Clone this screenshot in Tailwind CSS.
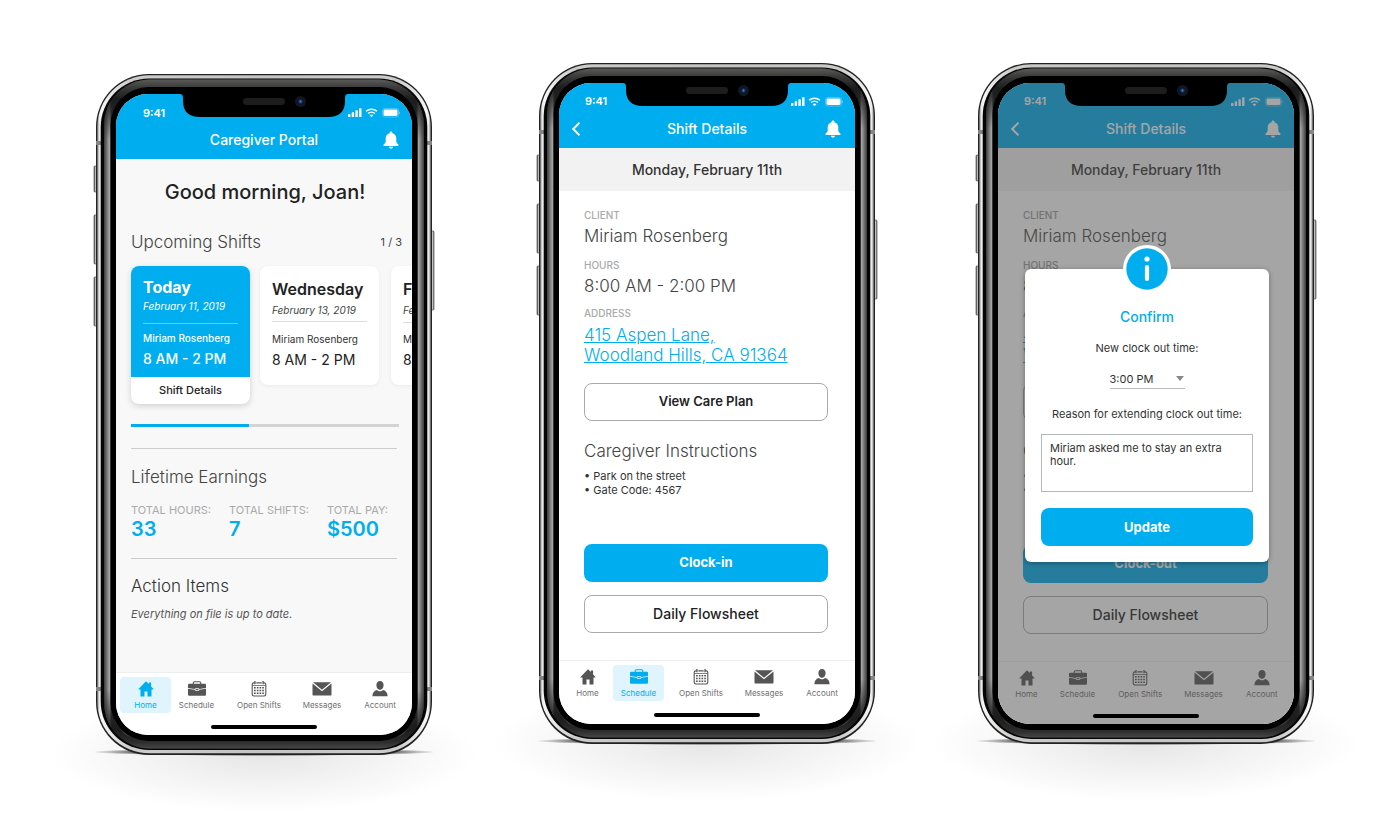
<!DOCTYPE html>
<html lang="en">
<head>
<meta charset="utf-8">
<meta name="viewport" content="width=device-width, initial-scale=1">
<title>Caregiver Portal</title>
<script src="https://cdn.jsdelivr.net/npm/@tailwindcss/browser@4"></script>
</head>
<body class="min-h-screen bg-white font-['Inter','Liberation_Sans',sans-serif] text-[#222]">

<svg class="absolute h-0 w-0" aria-hidden="true">
  <defs>
    <linearGradient id="steel" x1="0" x2="1" y1="0" y2="0">
      <stop offset="0" stop-color="#777"/><stop offset=".006" stop-color="#e8e8e8"/><stop offset=".012" stop-color="#f6f6f6"/><stop offset=".1" stop-color="#cbcbc9"/>
      <stop offset=".5" stop-color="#c4c4c2"/><stop offset=".9" stop-color="#cbcbc9"/><stop offset=".988" stop-color="#f6f6f6"/><stop offset=".994" stop-color="#e8e8e8"/><stop offset="1" stop-color="#777"/>
    </linearGradient>
    <linearGradient id="sides" x1="8" x2="328" y1="0" y2="0" gradientUnits="userSpaceOnUse">
      <stop offset="0" stop-color="#3a3a3a"/><stop offset=".017" stop-color="#a6a6a6"/><stop offset=".024" stop-color="#2a2a2a"/>
      <stop offset=".1" stop-color="#2a2a2a"/><stop offset=".9" stop-color="#2a2a2a"/>
      <stop offset=".976" stop-color="#2a2a2a"/><stop offset=".983" stop-color="#a6a6a6"/><stop offset="1" stop-color="#3a3a3a"/>
    </linearGradient>
    <linearGradient id="caps" x1="0" x2="0" y1="5" y2="676" gradientUnits="userSpaceOnUse">
      <stop offset="0" stop-color="#5c5c5a"/><stop offset=".012" stop-color="#3c3c3c"/><stop offset=".03" stop-color="#1c1c1c"/><stop offset=".09" stop-color="#222" stop-opacity="0"/>
      <stop offset=".91" stop-color="#222" stop-opacity="0"/><stop offset=".97" stop-color="#1c1c1c"/><stop offset=".988" stop-color="#2c2c2c"/><stop offset="1" stop-color="#4c4c4c"/>
    </linearGradient>
    <linearGradient id="key" x1="0" x2="1" y1="0" y2="0">
      <stop offset="0" stop-color="#555"/><stop offset=".5" stop-color="#ddd"/><stop offset="1" stop-color="#777"/>
    </linearGradient>
    <radialGradient id="contact"><stop offset="0" stop-color="#000" stop-opacity=".9"/><stop offset=".7" stop-color="#000" stop-opacity=".7"/><stop offset="1" stop-color="#000" stop-opacity="0"/></radialGradient>
    <radialGradient id="floor"><stop offset="0" stop-color="#000" stop-opacity=".1"/><stop offset=".5" stop-color="#000" stop-opacity=".05"/><stop offset="1" stop-color="#000" stop-opacity="0"/></radialGradient>
    <radialGradient id="lens"><stop offset="0" stop-color="#4f8fe0"/><stop offset=".45" stop-color="#1d3f7a"/><stop offset="1" stop-color="#0b1222"/></radialGradient>
  </defs>

  <symbol id="frame" viewBox="0 0 336 681" overflow="visible">
    <ellipse cx="168" cy="680" rx="215" ry="58" fill="url(#floor)"/>
    <ellipse cx="168" cy="678" rx="172" ry="4" fill="url(#contact)"/>
    <g stroke="#333" stroke-width=".6" fill="url(#key)">
      <rect x="-2" y="92" width="4" height="26" rx="1"/>
      <rect x="-2" y="141" width="4" height="49" rx="1"/>
      <rect x="-2" y="203" width="4" height="49" rx="1"/>
      <rect x="334" y="157" width="4" height="79" rx="1"/>
    </g>
    <rect width="336" height="681" rx="53" fill="#222"/>
    <rect x="1.200" y="1.300" width="333.600" height="678" rx="52" fill="url(#steel)"/>
    <path d="M0 67h5v4H0zM331 67h5v4h-5zM0 613h5v4H0zM331 613h5v4h-5z" fill="#858585"/>
    <rect x="4.700" y="4.500" width="326.600" height="671.500" rx="48.500" fill="#050505"/>
    <rect x="8" y="5.500" width="320" height="669" rx="46" fill="url(#sides)"/>
    <rect x="8" y="5.500" width="320" height="669" rx="46" fill="url(#caps)"/>
    <path d="M15 48Q18 28 34 18Q21 24 15 48zM321 48Q318 28 302 18Q315 24 321 48zM15 633Q18 653 34 663Q21 657 15 633zM321 633Q318 653 302 663Q315 657 321 633z" fill="#8b8b8b" opacity=".8"/>
    <rect x="14.500" y="13" width="307" height="654" rx="38" fill="#000"/>
  </symbol>

  <symbol id="notch" viewBox="0 0 168 24">
    <path d="M0 0Q3 0 3 4V7Q3 23 20 23H148Q165 23 165 7V4Q165 0 168 0Z" fill="#000"/>
    <rect x="63" y="4" width="42" height="7" rx="3.500" fill="#1d1d1d"/>
    <circle cx="120.500" cy="7.500" r="5.500" fill="#111722"/>
    <circle cx="120.500" cy="7.500" r="2.800" fill="url(#lens)"/>
  </symbol>

  <symbol id="status" viewBox="0 0 52 12">
    <g fill="currentColor">
      <rect x="0" y="7" width="2.400" height="3" rx=".6"/><rect x="3.700" y="5.300" width="2.400" height="4.700" rx=".6"/>
      <rect x="7.400" y="3.300" width="2.400" height="6.700" rx=".6"/><rect x="11.100" y="1.200" width="2.400" height="8.800" rx=".6"/>
      <path d="M23.500 7.400a2.900 2.900 0 0 1 1.900.8l-1.900 2-1.900-2a2.900 2.900 0 0 1 1.900-.8z"/>
      <rect x="35.500" y="2.500" width="14" height="6.500" rx="1.400"/>
      <path d="M50.900 4.200q1.100.5 1.100 1.600t-1.100 1.600z" opacity=".4"/>
    </g>
    <path d="M18.100 4.300a7.800 7.800 0 0 1 10.800 0M20.100 6.500a5 5 0 0 1 6.800 0" fill="none" stroke="currentColor" stroke-width="1.500"/>
    <rect x="34.400" y="1.400" width="16.200" height="8.700" rx="2.400" fill="none" stroke="currentColor" stroke-width=".7" opacity=".4"/>
  </symbol>

  <symbol id="bell" viewBox="0 0 16 18">
    <path d="M8 .5c.9 0 1.400.6 1.400 1.400v.3c2.400.6 3.900 2.500 3.900 4.900v3.500c0 1.300.9 1.900 2 3 .6.600.3 1.300-.5 1.300H1.200c-.8 0-1.100-.7-.5-1.300 1.100-1.100 2-1.700 2-3V7.100c0-2.400 1.500-4.300 3.900-4.900v-.3C6.600 1.100 7.100.5 8 .5zM6 15.700h4c0 1-.8 1.800-2 1.800s-2-.8-2-1.800z" fill="currentColor"/>
  </symbol>
  <symbol id="home" viewBox="0 0 20 16">
    <path d="M10 .3l2.800 2.800V1.600h2.300v3.800l2.400 2.600v.6h-2V15.400h-4V10.600h-3v4.800h-4V8.600h-2V8z" fill="currentColor"/>
  </symbol>
  <symbol id="case" viewBox="0 0 20 16">
    <path d="M6.300 3.200V1.900Q6.300.8 7.400.8h5.200q1.100 0 1.100 1.100v1.300" fill="none" stroke="currentColor" stroke-width="1.100"/>
    <path d="M2.100 2.700h15.800q1.100 0 1.100 1.100V7l-6.600 1.100q-.3-.8-1.200-.8H8.800q-.9 0-1.200.8L1 7V3.800q0-1.100 1.100-1.100zM1 7.700l6.600 1.100q.3 1.100 1.200 1.100h2.400q.9 0 1.200-1.100L19 7.700v5.900q0 1.200-1.100 1.200H2.100Q1 14.800 1 13.600z" fill="currentColor"/>
    <rect x="8.500" y="8" width="3" height="1.200" rx=".5" fill="currentColor"/>
  </symbol>
  <symbol id="cal" viewBox="0 0 20 16">
    <path d="M5.800 1.900H4.900q-1.700 0-1.700 1.700v9.700q0 1.700 1.700 1.700h10.200q1.700 0 1.700-1.700V3.600q0-1.700-1.700-1.700h-.9M7.300 1.900h5.400" fill="none" stroke="currentColor" stroke-width="1.100"/>
    <path d="M5.300 0h1.300v3.200H5.300zM13.400 0h1.300v3.200h-1.300zM3.500 4.200h13v.7h-13zM5 6h1.700v1.600H5zM7.800 6h1.700v1.600H7.800zM10.500 6h1.700v1.600h-1.700zM13.200 6h1.700v1.600h-1.700zM5 8.700h1.700v1.600H5zM7.800 8.700h1.700v1.600H7.800zM10.500 8.700h1.700v1.600h-1.700zM13.200 8.700h1.700v1.600h-1.700zM5 11.400h1.700V13H5zM7.800 11.400h1.700V13H7.800zM10.500 11.400h1.700V13h-1.700zM13.200 11.400h1.700V13h-1.700z" fill="currentColor"/>
  </symbol>
  <symbol id="mail" viewBox="0 0 20 16">
    <path d="M1 1.300h18L10 8.700zM.5 2.400L10 10.300l9.500-7.900v11q0 1.200-1.200 1.200H1.700Q.5 14.600.5 13.400z" fill="currentColor"/>
  </symbol>
  <symbol id="user" viewBox="0 0 20 16">
    <path d="M10 0c2.300 0 3.600 1.700 3.600 4S12.300 8.800 10 8.800 6.400 6.300 6.400 4 7.700 0 10 0zM2.400 15.300c0-3.400 1.500-5.600 4.500-6.300 1 .9 2 1.200 3.100 1.200S12.100 9.900 13.100 9c3 .7 4.500 2.900 4.500 6.300z" fill="currentColor"/>
  </symbol>
</svg>

<main class="flex items-start justify-center pt-[63px] pb-[61px] pl-[10px]">

  <!-- Home -->
  <section aria-label="Home" class="relative mt-[11px] h-[681px] w-[336px] shrink-0 p-5">
    <svg class="absolute inset-0 h-full w-full overflow-visible" aria-hidden="true"><use href="#frame"/></svg>
    <div class="relative flex h-full flex-col overflow-hidden rounded-[32px] bg-[#f8f8f8]">
      <svg class="absolute top-0 left-[64px] h-6 w-[168px]" aria-hidden="true"><use href="#notch"/></svg>
      <header class="h-[65px] bg-[#00adef] text-white">
        <div class="flex h-[34px] items-center justify-between pt-1 pr-[12px] pl-[27px]">
          <span class="text-[11px] font-semibold">9:41</span>
          <svg class="h-3 w-[52px]" aria-hidden="true"><use href="#status"/></svg>
        </div>
        <div class="grid h-6 grid-cols-[40px_1fr_40px] items-center">
          <h1 class="col-start-2 text-center text-sm leading-6 font-medium">Caregiver Portal</h1>
          <button type="button" aria-label="Notifications" class="justify-self-end pr-[13px]"><svg class="h-[18px] w-4"><use href="#bell"/></svg></button>
        </div>
      </header>

      <div class="flex-1 pl-[15px]">
        <h2 class="mt-5 mr-[13px] text-center text-[20px] leading-[26px] font-medium">Good morning, Joan!</h2>
        <div class="mt-[25px] mr-[10px] flex items-center justify-between">
          <h3 class="text-[17px] leading-6 font-light text-[#444]">Upcoming Shifts</h3>
          <span class="text-[11px] text-[#444]">1 / 3</span>
        </div>

        <div class="mt-3 flex items-start">
          <article class="w-[119px] shrink-0 overflow-hidden rounded-lg bg-white shadow-[0_2px_6px_rgba(0,0,0,0.16)]">
            <div class="bg-[#00adef] px-3 pt-[11px] pb-2 text-white">
              <h4 class="text-base leading-5 font-bold">Today</h4>
              <p class="mt-px text-[10px] leading-4 italic">February 11, 2019</p>
              <hr class="mt-[9px] border-[#66cef5]">
              <p class="mt-[6px] text-[10px] leading-4 font-medium">Miriam Rosenberg</p>
              <p class="mt-[3px] text-sm leading-5 font-medium">8 AM - 2 PM</p>
            </div>
            <a href="#details" class="block text-center text-[11px] leading-[27px] font-medium">Shift Details</a>
          </article>
          <article class="ml-[10px] h-[119px] w-[119px] shrink-0 rounded-lg bg-white px-3 pt-[13px] shadow-[0_1px_4px_rgba(0,0,0,0.06)]">
            <h4 class="text-base leading-5 font-semibold">Wednesday</h4>
            <p class="mt-[3px] text-[10px] leading-4 text-[#444] italic">February 13, 2019</p>
            <hr class="mt-[3px] border-[#ddd]">
            <p class="mt-[9px] text-[10px] leading-4 text-[#333]">Miriam Rosenberg</p>
            <p class="mt-[3px] text-sm leading-5">8 AM - 2 PM</p>
          </article>
          <article class="ml-3 h-[119px] w-[119px] shrink-0 rounded-lg bg-white px-3 pt-[13px] shadow-[0_1px_4px_rgba(0,0,0,0.06)]">
            <h4 class="text-base leading-5 font-semibold">Friday</h4>
            <p class="mt-[3px] text-[10px] leading-4 text-[#444] italic">February 15, 2019</p>
            <hr class="mt-[4px] border-[#ddd]">
            <p class="mt-[8px] text-[10px] leading-4 text-[#333]">Miriam Rosenberg</p>
            <p class="mt-[3px] text-sm leading-5">8 AM - 2 PM</p>
          </article>
        </div>

        <div class="mt-5 mr-[13px] h-[3px] bg-[#d3d3d3]"><div class="h-full bg-[#00adef]" style="width:44%"></div></div>
        <hr class="mt-[21px] mr-[15px] border-[#ccc]">

        <h3 class="mt-4 text-[17px] leading-6 font-light text-[#444]">Lifetime Earnings</h3>
        <dl class="mt-[13px] mr-[15px] grid grid-cols-[98px_98px_1fr]">
          <div><dt class="text-[11px] leading-4 text-[#aaa]">TOTAL HOURS:</dt><dd class="text-[20px] leading-[22px] font-semibold text-[#00adef]">33</dd></div>
          <div><dt class="text-[11px] leading-4 text-[#aaa]">TOTAL SHIFTS:</dt><dd class="text-[20px] leading-[22px] font-semibold text-[#00adef]">7</dd></div>
          <div><dt class="text-[11px] leading-4 text-[#aaa]">TOTAL PAY:</dt><dd class="text-[20px] leading-[22px] font-semibold text-[#00adef]">$500</dd></div>
        </dl>
        <hr class="mt-[18px] mr-[15px] border-[#ccc]">
        <h3 class="mt-[15px] text-[17px] leading-6 font-light text-[#333]">Action Items</h3>
        <p class="mt-2 text-[11px] leading-4 text-[#555] italic">Everything on file is up to date.</p>
      </div>

      <nav class="h-[63px] border-t border-[#eee] bg-white px-0 pt-1 text-[#707070]">
        <div class="grid grid-cols-[51px_51px_74fr_52fr_64fr] pl-1 text-[8px] leading-3">
          <a href="#home" aria-current="page" class="flex h-9 flex-col items-center gap-[2px] rounded bg-[#dff4fd] pt-1 text-[#00adef]"><svg class="h-4 w-5"><use href="#home"/></svg>Home</a>
          <a href="#schedule" class="flex h-9 flex-col items-center gap-[2px] rounded pt-1"><svg class="h-4 w-5 text-[#555]"><use href="#case"/></svg>Schedule</a>
          <a href="#open" class="flex h-9 flex-col items-center gap-[2px] rounded pt-1"><svg class="h-4 w-5 text-[#555]"><use href="#cal"/></svg>Open Shifts</a>
          <a href="#messages" class="flex h-9 flex-col items-center gap-[2px] rounded pt-1"><svg class="h-4 w-5 text-[#555]"><use href="#mail"/></svg>Messages</a>
          <a href="#account" class="flex h-9 flex-col items-center gap-[2px] rounded pt-1"><svg class="h-4 w-5 text-[#555]"><use href="#user"/></svg>Account</a>
        </div>
        <div class="mx-auto mt-3 h-1 w-[106px] rounded-full bg-black"></div>
      </nav>
    </div>
  </section>

  <!-- Shift details -->
  <section aria-label="Shift details" id="details" class="relative ml-[107px] h-[681px] w-[336px] shrink-0 p-5">
    <svg class="absolute inset-0 h-full w-full overflow-visible" aria-hidden="true"><use href="#frame"/></svg>
    <div class="relative flex h-full flex-col overflow-hidden rounded-[32px] bg-white">
      <svg class="absolute top-0 left-[64px] h-6 w-[168px]" aria-hidden="true"><use href="#notch"/></svg>
      <header class="h-[65px] bg-[#00adef] text-white shadow-[0_1px_2px_rgba(0,0,0,0.25)]">
        <div class="flex h-[34px] items-center justify-between pt-[3px] pr-[12px] pl-[26px]">
          <span class="text-[11px] font-semibold">9:41</span>
          <svg class="h-3 w-[52px]" aria-hidden="true"><use href="#status"/></svg>
        </div>
        <div class="grid h-6 grid-cols-[40px_1fr_40px] items-center">
          <button type="button" aria-label="Back" class="pl-3"><svg class="h-[14px] w-[10px]" viewBox="0 0 10 14"><path d="M8.500 .700L2.200 7l6.300 6.300" fill="none" stroke="currentColor" stroke-width="2"/></svg></button>
          <h1 class="text-center text-sm leading-6 font-medium">Shift Details</h1>
          <button type="button" aria-label="Notifications" class="justify-self-end pr-[14px]"><svg class="h-[18px] w-4"><use href="#bell"/></svg></button>
        </div>
      </header>
      <p class="bg-[#f2f2f2] text-center text-sm leading-[43px] font-medium text-[#333]">Monday, February 11th</p>

      <div class="flex-1 pt-4 pr-[27px] pl-[25px]">
        <dl class="text-[17px] leading-5 font-light text-[#444]">
          <dt class="text-[10px] leading-4 font-medium text-[#aaa]">CLIENT</dt>
          <dd class="mt-[3px]">Miriam Rosenberg</dd>
          <dt class="mt-[11px] text-[10px] leading-4 font-medium text-[#aaa]">HOURS</dt>
          <dd class="mt-[3px]">8:00 AM - 2:00 PM</dd>
          <dt class="mt-[9px] text-[10px] leading-4 font-medium text-[#aaa]">ADDRESS</dt>
          <dd class="mt-1"><a href="#map" class="text-[#00adef] underline">415 Aspen Lane,<br>Woodland Hills, CA 91364</a></dd>
        </dl>
        <button type="button" class="mt-[18px] block h-[38px] w-full rounded-lg border border-[#aaa] text-[13px] font-semibold">View Care Plan</button>
        <h3 class="mt-[18px] text-[17px] leading-6 font-light text-[#444]">Caregiver Instructions</h3>
        <ul class="mt-[6px] text-[11px] leading-[14px] text-[#333]">
          <li>• Park on the street</li>
          <li>• Gate Code: 4567</li>
        </ul>
        <button type="button" class="mt-[47px] block h-[38px] w-full rounded-lg bg-[#00adef] text-[13px] font-bold text-white">Clock-in</button>
        <button type="button" class="mt-[13px] block h-[38px] w-full rounded-lg border border-[#aaa] text-sm font-medium">Daily Flowsheet</button>
      </div>

      <nav class="h-[64px] border-t border-[#eee] bg-white pt-1 text-[#707070]">
        <div class="grid grid-cols-[51px_51px_74fr_52fr_64fr] pr-px pl-[3px] text-[8px] leading-3">
          <a href="#home" class="flex h-9 flex-col items-center gap-[2px] rounded pt-1"><svg class="h-4 w-5 text-[#555]"><use href="#home"/></svg>Home</a>
          <a href="#schedule" aria-current="page" class="flex h-9 flex-col items-center gap-[2px] rounded bg-[#dff4fd] pt-1 text-[#00adef]"><svg class="h-4 w-5"><use href="#case"/></svg>Schedule</a>
          <a href="#open" class="flex h-9 flex-col items-center gap-[2px] rounded pt-1"><svg class="h-4 w-5 text-[#555]"><use href="#cal"/></svg>Open Shifts</a>
          <a href="#messages" class="flex h-9 flex-col items-center gap-[2px] rounded pt-1"><svg class="h-4 w-5 text-[#555]"><use href="#mail"/></svg>Messages</a>
          <a href="#account" class="flex h-9 flex-col items-center gap-[2px] rounded pt-1"><svg class="h-4 w-5 text-[#555]"><use href="#user"/></svg>Account</a>
        </div>
        <div class="mx-auto mt-3 h-1 w-[106px] rounded-full bg-black"></div>
      </nav>
    </div>
  </section>

  <!-- Clock-out confirmation -->
  <section aria-label="Extend shift" class="relative ml-[103px] h-[681px] w-[336px] shrink-0 p-5">
    <svg class="absolute inset-0 h-full w-full overflow-visible" aria-hidden="true"><use href="#frame"/></svg>
    <div class="relative flex h-full flex-col overflow-hidden rounded-[32px] bg-white">
      <header class="h-[65px] bg-[#00adef] text-white shadow-[0_1px_2px_rgba(0,0,0,0.25)]">
        <div class="flex h-[34px] items-center justify-between pt-[3px] pr-[11px] pl-[26px]">
          <span class="text-[11px] font-semibold">9:41</span>
          <svg class="h-3 w-[52px]" aria-hidden="true"><use href="#status"/></svg>
        </div>
        <div class="grid h-6 grid-cols-[40px_1fr_40px] items-center">
          <button type="button" aria-label="Back" class="pl-3"><svg class="h-[14px] w-[10px]" viewBox="0 0 10 14"><path d="M8.500 .700L2.200 7l6.300 6.300" fill="none" stroke="currentColor" stroke-width="2"/></svg></button>
          <h1 class="text-center text-sm leading-6 font-medium">Shift Details</h1>
          <button type="button" aria-label="Notifications" class="justify-self-end pr-[13px]"><svg class="h-[18px] w-4"><use href="#bell"/></svg></button>
        </div>
      </header>
      <p class="bg-[#f2f2f2] text-center text-sm leading-[43px] font-medium text-[#333]">Monday, February 11th</p>

      <div class="flex-1 pt-4 pr-[26px] pl-[25px]">
        <dl class="text-[17px] leading-5 font-light text-[#444]">
          <dt class="text-[10px] leading-4 font-medium text-[#999]">CLIENT</dt>
          <dd class="mt-[3px]">Miriam Rosenberg</dd>
          <dt class="mt-[11px] text-[10px] leading-4 font-medium text-[#999]">HOURS</dt>
          <dd class="mt-[3px]">8:00 AM - 2:00 PM</dd>
          <dt class="mt-[9px] text-[10px] leading-4 font-medium text-[#999]">ADDRESS</dt>
          <dd class="mt-1"><a href="#map" class="text-[#00adef] underline">415 Aspen Lane,<br>Woodland Hills, CA 91364</a></dd>
        </dl>
        <button type="button" class="mt-[18px] block h-[38px] w-full rounded-lg border border-[#aaa] text-[13px] font-semibold">View Care Plan</button>
        <h3 class="mt-[18px] text-[17px] leading-6 font-light text-[#444]">Caregiver Instructions</h3>
        <ul class="mt-[6px] text-[11px] leading-[14px] text-[#333]">
          <li>• Park on the street</li>
          <li>• Gate Code: 4567</li>
        </ul>
        <button type="button" class="mt-12 block h-[38px] w-full rounded-lg bg-[#00adef] text-[13px] font-bold text-white">Clock-out</button>
        <button type="button" class="mt-[13px] block h-[38px] w-full rounded-lg border border-[#aaa] text-sm font-medium">Daily Flowsheet</button>
      </div>

      <nav class="h-[63px] border-t border-[#eee] bg-white pt-1 text-[#707070]">
        <div class="grid grid-cols-[51px_51px_74fr_52fr_64fr] pl-[3px] text-[8px] leading-3">
          <a href="#home" class="flex h-9 flex-col items-center gap-[2px] rounded pt-1"><svg class="h-4 w-5 text-[#555]"><use href="#home"/></svg>Home</a>
          <a href="#schedule" class="flex h-9 flex-col items-center gap-[2px] rounded pt-1"><svg class="h-4 w-5 text-[#555]"><use href="#case"/></svg>Schedule</a>
          <a href="#open" class="flex h-9 flex-col items-center gap-[2px] rounded pt-1"><svg class="h-4 w-5 text-[#555]"><use href="#cal"/></svg>Open Shifts</a>
          <a href="#messages" class="flex h-9 flex-col items-center gap-[2px] rounded pt-1"><svg class="h-4 w-5 text-[#555]"><use href="#mail"/></svg>Messages</a>
          <a href="#account" class="flex h-9 flex-col items-center gap-[2px] rounded pt-1"><svg class="h-4 w-5 text-[#555]"><use href="#user"/></svg>Account</a>
        </div>
      </nav>

      <div class="absolute inset-0 flex flex-col items-center justify-end bg-[#4c4c4c]/50 pb-[6px]"><div class="h-1 w-[106px] rounded-full bg-black"></div></div>
      <svg class="absolute top-0 left-[64px] h-6 w-[168px]" aria-hidden="true"><use href="#notch"/></svg>

      <form role="dialog" aria-label="Confirm" class="absolute top-[186px] right-[25px] left-[27px] rounded-md bg-white px-4 pt-[38px] pb-4 text-center text-[11px] leading-4 text-[#333] shadow-[0_1px_5px_rgba(0,0,0,0.35)]">
        <svg class="absolute -top-6 left-1/2 h-12 w-12 -translate-x-1/2" viewBox="0 0 48 48" aria-hidden="true">
          <circle cx="24" cy="24" r="24" fill="#fff"/><circle cx="24" cy="24" r="20.700" fill="#00adef"/>
          <circle cx="24" cy="14" r="2.600" fill="#fff"/><rect x="21.900" y="20" width="4.200" height="16" rx="2.100" fill="#fff"/>
        </svg>
        <h2 class="text-sm leading-5 font-medium text-[#00adef]">Confirm</h2>
        <label for="time" class="mt-[13px] block">New clock out time:</label>
        <div class="relative mx-auto mt-[14px] w-[75px]">
          <select id="time" class="h-[19px] w-full appearance-none border-b border-[#bbb] bg-transparent"><option>3:00 PM</option></select>
          <svg class="absolute top-[6px] right-px h-[5px] w-2" viewBox="0 0 8 5" aria-hidden="true"><path d="M0 0h8L4 5z" fill="#888"/></svg>
        </div>
        <label for="reason" class="mt-[17px] block">Reason for extending clock out time:</label>
        <textarea id="reason" class="mt-3 block h-[58px] w-full resize-none border border-[#b5b8b8] px-2 py-[7px] text-left leading-[13px]">Miriam asked me to stay an extra hour.</textarea>
        <button type="button" class="mt-4 block h-[38px] w-full rounded-lg bg-[#00adef] text-[13px] font-bold text-white">Update</button>
      </form>
    </div>
  </section>
</main>
</body>
</html>
